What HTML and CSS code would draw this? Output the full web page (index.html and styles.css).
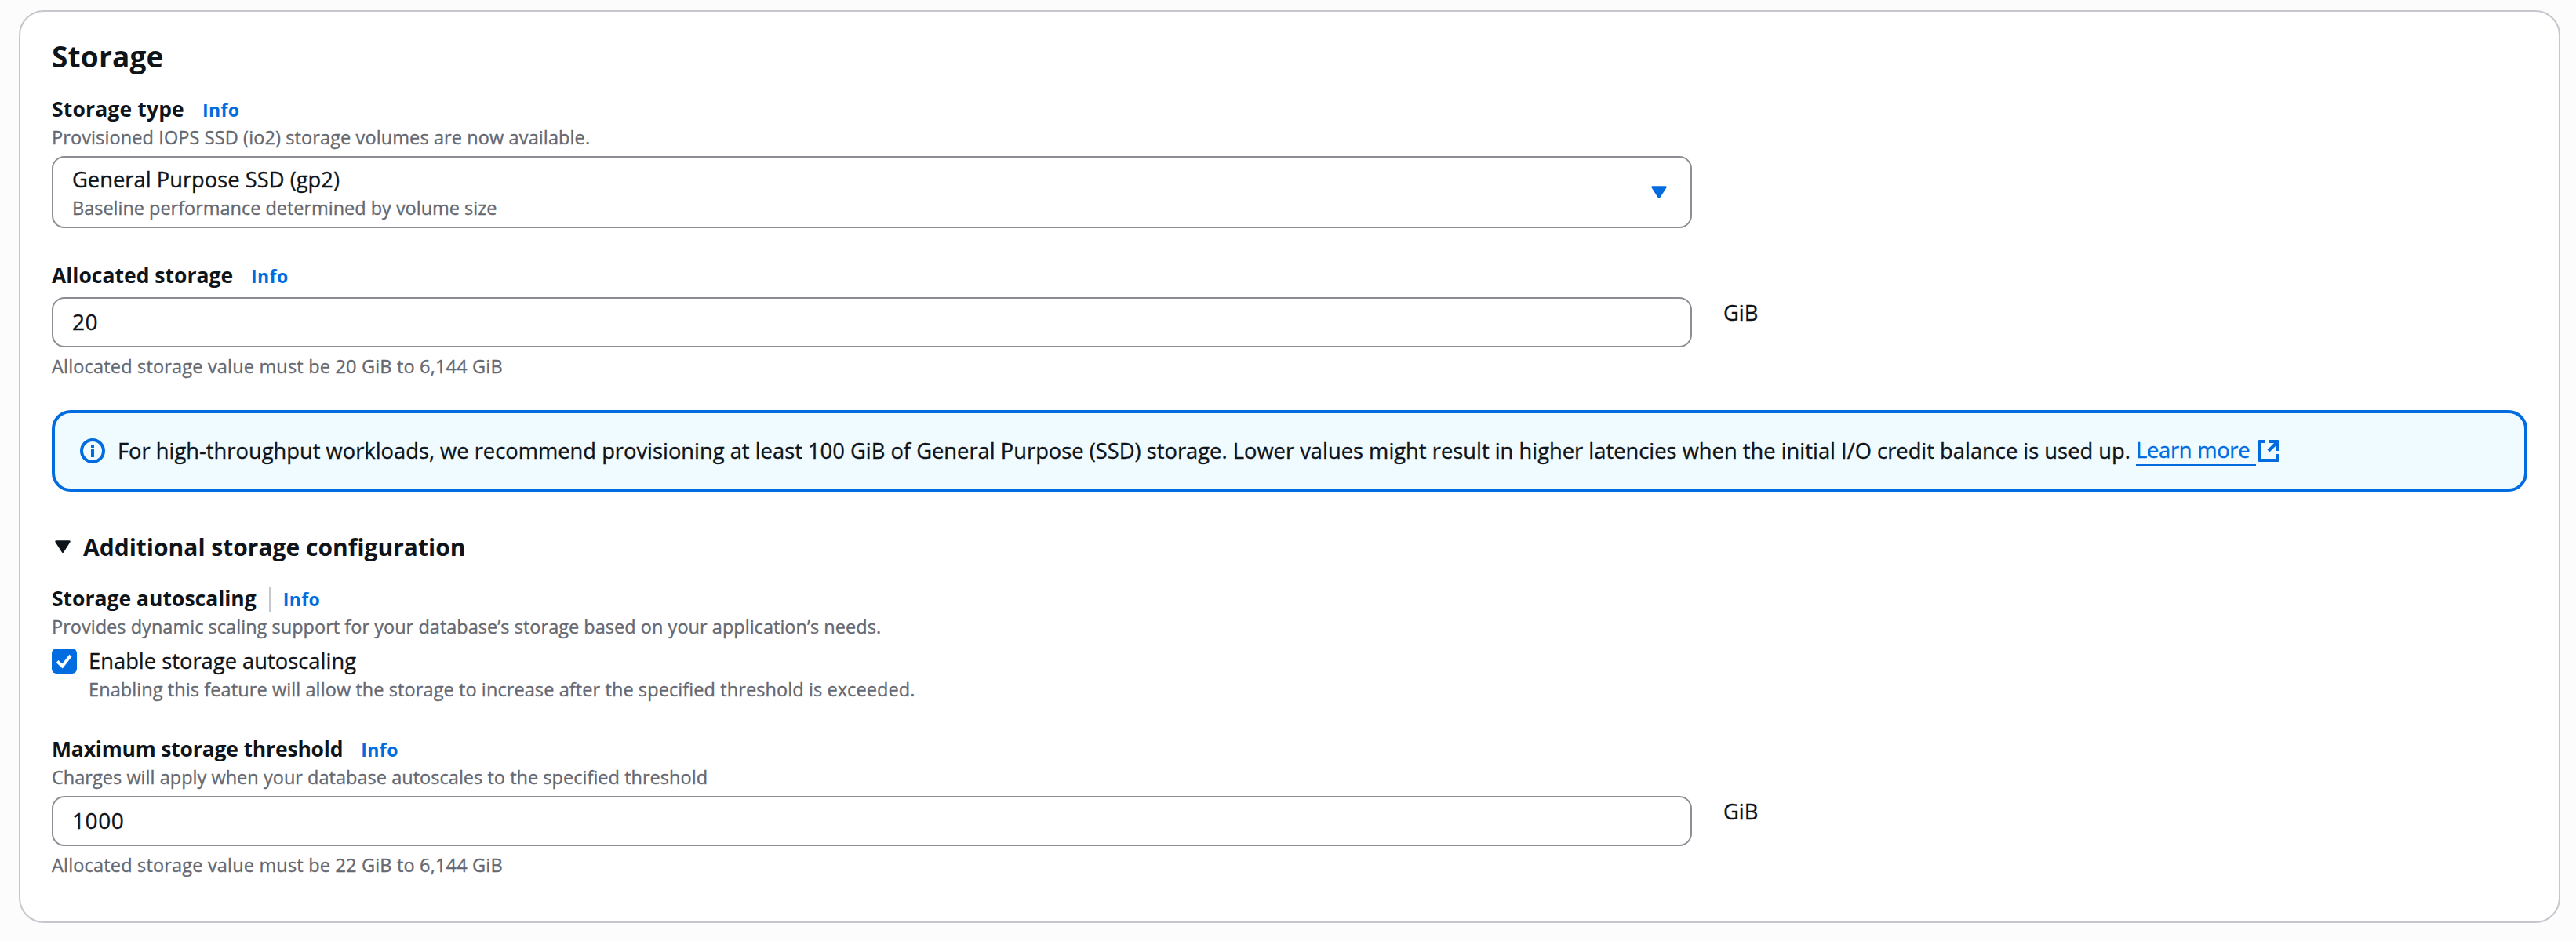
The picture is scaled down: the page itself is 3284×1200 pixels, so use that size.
FILE: index.html
```html
<!DOCTYPE html>
<html lang="en">
<head>
<meta charset="utf-8">
<title>Storage</title>
<link rel="stylesheet" href="styles.css">
</head>
<body>
<section class="card">
  <h2 class="card-title">Storage</h2>

  <div class="field field-type">
    <div class="label-row"><span class="label label-type">Storage type</span><a class="info">Info</a></div>
    <p class="caption cap-type">Provisioned IOPS SSD (io2) storage volumes are now available.</p>
    <div class="grid">
      <div class="control select">
        <div class="select-text">
          <div class="body-text">General Purpose SSD (gp2)</div>
          <div class="caption cap-option">Baseline performance determined by volume size</div>
        </div>
        <svg class="caret" width="20" height="16" viewBox="0 0 20 16"><path d="M1.5 1.5h17L10 14.8z" fill="#006ce0" stroke="#006ce0" stroke-width="2.4" stroke-linejoin="round"/></svg>
      </div>
    </div>
  </div>

  <div class="field">
    <div class="label-row"><span class="label">Allocated storage</span><a class="info">Info</a></div>
    <div class="grid spaced">
      <div class="control input">20</div>
      <div class="body-text unit">GiB</div>
    </div>
    <p class="caption hint">Allocated storage value must be 20 GiB to 6,144 GiB</p>
  </div>

  <div class="alert">
    <svg class="alert-icon" width="32" height="32" viewBox="0 0 32 32"><circle cx="16" cy="16" r="14" fill="none" stroke="#006ce0" stroke-width="4"/><path d="M16 8v4M16 14v10" stroke="#006ce0" stroke-width="4"/></svg>
    <div class="body-text alert-text">For high-throughput workloads, we recommend provisioning at least 100 GiB of General Purpose (SSD) storage. Lower values might result in higher latencies when the initial I/O credit balance is used up.</div>
    <a class="body-text learn">Learn more</a>
    <svg class="external" width="28" height="28" viewBox="0 0 28 28"><path d="M10 2H2v24h24v-8M14 2h12v12M25 3L14 14" fill="none" stroke="#006ce0" stroke-width="4" stroke-linejoin="round"/></svg>
  </div>

  <div class="expander">
    <svg class="expander-icon" width="20" height="16" viewBox="0 0 20 16"><path d="M1.5 1.5h17L10 14.8z" fill="#0f141a" stroke="#0f141a" stroke-width="2.4" stroke-linejoin="round"/></svg>
    <h3 class="expander-title">Additional storage configuration</h3>
  </div>

  <div class="field field-scaling">
    <div class="label-row divided"><span class="label">Storage autoscaling</span><span class="divider"></span><a class="info">Info</a></div>
    <p class="caption">Provides dynamic scaling support for your database’s storage based on your application’s needs.</p>
    <div class="check-row">
      <svg class="checkbox" width="32" height="32" viewBox="0 0 32 32"><rect width="32" height="32" rx="6" fill="#006ce0"/><path d="M7 16.5l6.5 6L24 9" fill="none" stroke="#fff" stroke-width="4"/></svg>
      <div>
        <div class="body-text">Enable storage autoscaling</div>
        <div class="caption cap-check">Enabling this feature will allow the storage to increase after the specified threshold is exceeded.</div>
      </div>
    </div>
  </div>

  <div class="field">
    <div class="label-row"><span class="label label-max">Maximum storage threshold</span><a class="info">Info</a></div>
    <p class="caption">Charges will apply when your database autoscales to the specified threshold</p>
    <div class="grid spaced">
      <div class="control input">1000</div>
      <div class="body-text unit">GiB</div>
    </div>
    <p class="caption hint">Allocated storage value must be 22 GiB to 6,144 GiB</p>
  </div>
</section>
</body>
</html>
```
FILE: styles.css
```css
* { box-sizing: border-box; }
body {
  margin: 0;
  padding: 13px 20px 23px 24px;
  height: 1200px;
  background: #fcfcfd;
  color: #0f141a;
  font-family: "Open Sans", "Noto Sans", sans-serif;
  white-space: nowrap;
}
h2, h3, p { margin: 0; }
svg { display: block; flex: none; }

.card {
  height: 1164px;
  padding: 33px 40px 0;
  border: 2px solid #c6c6cd;
  border-radius: 32px;
  background: #fff;
}
.card-title {
  margin-bottom: 23px;
  font-size: 37px;
  line-height: 48px;
  letter-spacing: 0.2px;
}

.field { margin-bottom: 40px; }
.label-row { display: flex; gap: 23px; height: 40px; }
.label { font-size: 26.5px; font-weight: 700; line-height: 40px; }
.label-type { letter-spacing: 0.15px; }
.label-max { letter-spacing: -0.18px; }
.info {
  color: #006ce0;
  font-size: 23px;
  font-weight: 700;
  line-height: 42px;
  letter-spacing: 0.4px;
}
.divided { gap: 16px; }
.divider { width: 2px; height: 32px; margin-top: 5px; background: #c6c6cd; }

.caption {
  color: #656871;
  font-size: 23.5px;
  line-height: 32px;
  letter-spacing: 0.03px;
  -webkit-text-stroke: 0.35px currentColor;
}
.cap-type { letter-spacing: 0.11px; }
.cap-option { letter-spacing: -0.02px; }
.cap-check { letter-spacing: 0.09px; }
.hint { margin-top: 8px; letter-spacing: 0.18px; }
.body-text {
  font-size: 27.3px;
  line-height: 40px;
  letter-spacing: 0.02px;
  -webkit-text-stroke: 0.35px currentColor;
}

.grid { display: grid; grid-template-columns: 2091px 1fr; column-gap: 40px; margin-top: 8px; }
.control { border: 2px solid #8c8c94; border-radius: 16px; background: #fff; }
.select {
  display: flex;
  align-items: center;
  justify-content: space-between;
  height: 92px;
  padding: 0 30px 0 24px;
}
.input {
  height: 64px;
  padding: 0 24px;
  font-size: 28px;
  line-height: 59px;
  letter-spacing: 0.6px;
  -webkit-text-stroke: 0.35px currentColor;
}
.unit { letter-spacing: 0; }

.alert {
  display: flex;
  align-items: center;
  height: 104px;
  margin-bottom: 46px;
  padding-left: 32px;
  border: 4px solid #006ce0;
  border-radius: 24px;
  background: #f0fbff;
}
.alert-text { margin-left: 16px; letter-spacing: 0.01px; }
.learn {
  margin-left: 7px;
  padding-right: 8px;
  color: #006ce0;
  letter-spacing: -0.25px;
  border-bottom: 2px solid #006ce0;
  line-height: 36px;
}
.external { margin-left: 2px; }

.expander { display: flex; align-items: center; height: 48px; margin-bottom: 22px; padding-left: 4px; }
.expander-icon { margin-right: 16px; }
.expander-title { font-size: 30px; line-height: 48px; padding-top: 1px; }

.check-row { display: flex; gap: 15px; margin-top: 8px; }
.checkbox { margin-top: 4px; }
```
